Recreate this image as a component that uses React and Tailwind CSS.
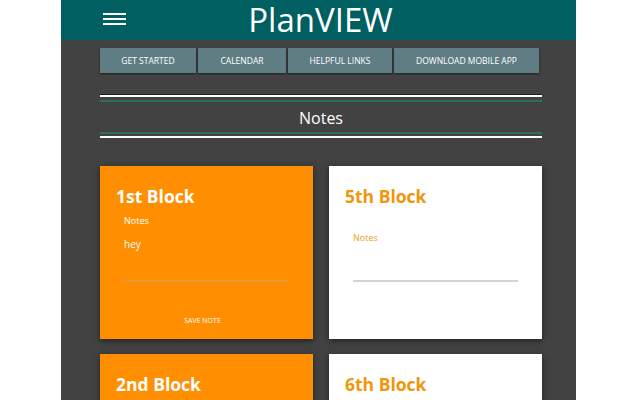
import React from 'react';

const navItems = [
    { label: 'Get Started', w: 'w-[96px]' },
    { label: 'Calendar', w: 'w-[88px]' },
    { label: 'Helpful Links', w: 'w-[104px]' },
    { label: 'Download Mobile App', w: 'w-[145px]' },
];

const OrangeBlock = ({ title, note }) => (
    <div className="h-[173px] bg-[#ff8f00] shadow-[0_2px_6px_rgba(0,0,0,0.5)] pl-[16px] pr-[24px] pt-[22px] flex flex-col">
        <h2 className="text-[17.5px] font-bold text-white leading-none">{title}</h2>
        <div className="pl-[8px] mt-[10px]">
            <p className="text-[9px] text-white leading-none">Notes</p>
            <p className="text-[10px] text-white mt-[14px] leading-none">{note}</p>
            <div className="mt-[31px] h-px bg-[#c9a06a]"></div>
        </div>
        <p className="mt-[36px] text-center text-[7px] uppercase text-white leading-none">Save Note</p>
    </div>
);

const WhiteBlock = ({ title }) => (
    <div className="h-[173px] bg-white shadow-[0_2px_6px_rgba(0,0,0,0.5)] pl-[16px] pr-[24px] pt-[22px] flex flex-col">
        <h2 className="text-[17.5px] font-bold text-[#f0960a] leading-none">{title}</h2>
        <div className="pl-[8px] mt-[27px]">
            <p className="text-[9px] text-[#e8a020] leading-none">Notes</p>
            <div className="mt-[38px] h-[2px] bg-[#d4d4d4]"></div>
        </div>
    </div>
);

export default function App() {
    return (
        <div className="min-h-screen bg-white" style={{ fontFamily: '"Open Sans", "Noto Sans", sans-serif' }}>
            <div className="ml-[61px] w-[515px] min-h-screen bg-[#424242]">
                {/* Header */}
                <header className="h-[40px] bg-[#005f60] flex items-center relative">
                    <div className="absolute left-[42px] top-[13px] flex flex-col gap-[3px]">
                        <span className="block w-[23px] h-[2px] bg-white"></span>
                        <span className="block w-[23px] h-[2px] bg-white"></span>
                        <span className="block w-[23px] h-[2px] bg-white"></span>
                    </div>
                    <h1 className="w-full text-center text-[33px] text-white leading-[40px] pl-[4px]">PlanVIEW</h1>
                </header>

                <div className="pl-[39px] pr-[34px]">
                    {/* Nav buttons */}
                    <nav className="flex gap-[2px] pt-[8px]">
                        {navItems.map((item) => (
                            <button
                                key={item.label}
                                className={`${item.w} h-[25px] bg-[#607d84] text-white text-[8.5px] uppercase shadow-[0_1px_2px_rgba(0,0,0,0.6)] pt-[2px]`}
                            >
                                {item.label}
                            </button>
                        ))}
                    </nav>

                    {/* Notes heading */}
                    <div className="mt-[21px]">
                        <div className="h-px bg-[#1e1e1e]"></div>
                        <div className="h-[2px] bg-white"></div>
                        <div className="mt-[3px] h-[2px] bg-[#2e6e5c]"></div>
                        <h3 className="text-center text-[16px] text-white leading-none pt-[8px] pb-[6px]">Notes</h3>
                        <div className="h-[2px] bg-[#2e6e5c]"></div>
                        <div className="mt-[2px] h-[2px] bg-white"></div>
                    </div>

                    {/* Blocks */}
                    <div className="grid grid-cols-2 gap-x-[16px] gap-y-[15px] mt-[28px] pb-[20px]">
                        <OrangeBlock title="1st Block" note="hey" />
                        <WhiteBlock title="5th Block" />
                        <OrangeBlock title="2nd Block" note="" />
                        <WhiteBlock title="6th Block" />
                    </div>
                </div>
            </div>
        </div>
    );
}
